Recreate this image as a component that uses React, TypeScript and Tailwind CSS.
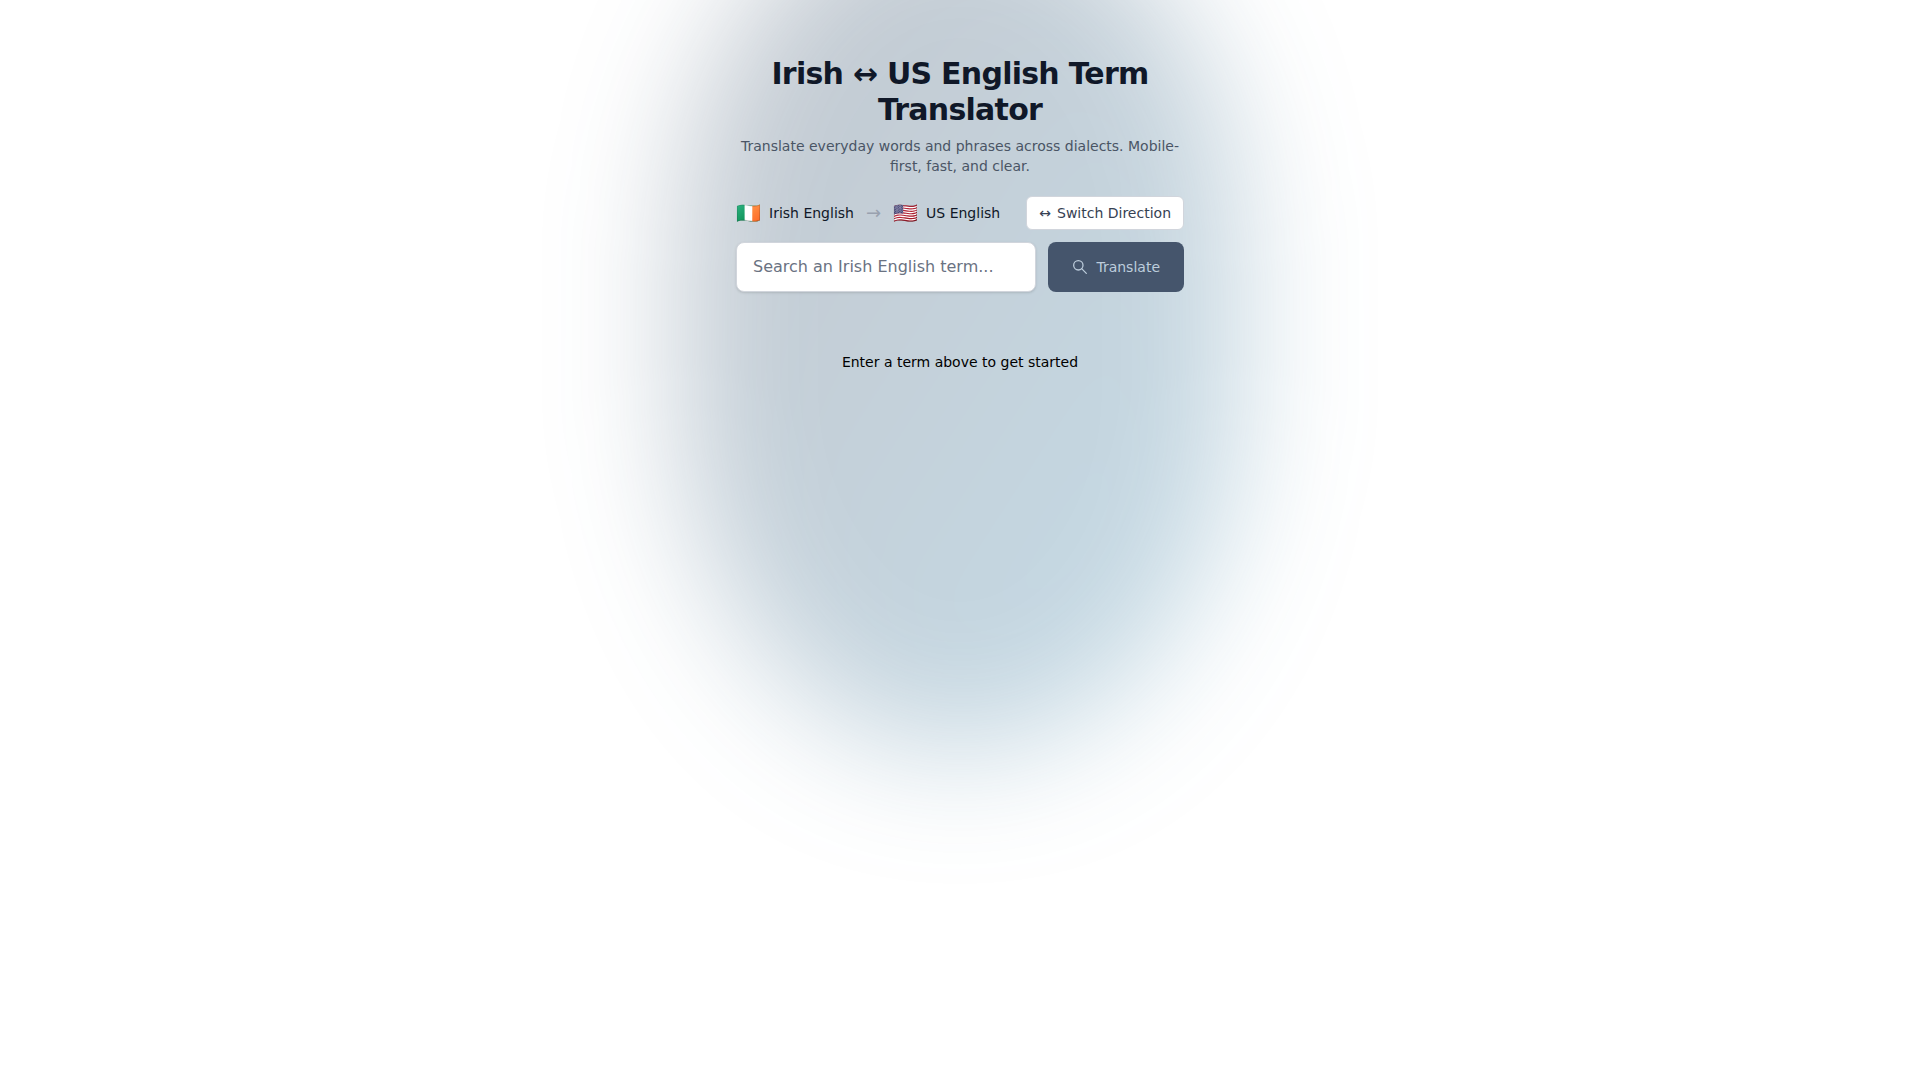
"use client";

import React, { FormEvent, useState } from "react";

// the two dialects that can be translated
const dialects = {
  irish: { flag: "🇮🇪", name: "Irish English", placeholder: "Search an Irish English term..." },
  us: { flag: "🇺🇸", name: "US English", placeholder: "Search a US English term..." },
};

const App = () => {
  const [fromIrish, setFromIrish] = useState(true);
  const [term, setTerm] = useState("");

  const source = fromIrish ? dialects.irish : dialects.us;
  const target = fromIrish ? dialects.us : dialects.irish;

  // function for submitting the term
  const handleSubmit = (e: FormEvent) => {
    e.preventDefault();
  };

  return (
    <div className="relative isolate min-h-screen overflow-hidden bg-white font-['DejaVu_Sans',sans-serif] text-black">
      {/* soft glow behind the content */}
      <div
        aria-hidden="true"
        className="absolute inset-x-0 -top-28 -z-10 flex justify-center blur-3xl"
      >
        <div className="h-[80vh] w-140 rounded-[50%/42%] bg-linear-to-br from-[#1e2f48] to-[#2480ac] opacity-27" />
      </div>

      <main className="mx-auto w-full max-w-md pt-14">
        <header className="text-center">
          <h1 className="text-3xl font-bold tracking-tight text-gray-900">
            Irish ↔ US English Term Translator
          </h1>
          <p className="mt-2 text-sm text-gray-600">
            Translate everyday words and phrases across dialects. Mobile-first, fast, and clear.
          </p>
        </header>

        <div className="mt-5 flex items-center justify-between">
          <div className="flex items-center gap-3 text-sm text-gray-900">
            <span className="flex items-center gap-2">
              <span className="text-xl">{source.flag}</span>
              <span>{source.name}</span>
            </span>
            <span className="text-lg text-gray-400">→</span>
            <span className="flex items-center gap-2">
              <span className="text-xl">{target.flag}</span>
              <span>{target.name}</span>
            </span>
          </div>
          <button
            type="button"
            onClick={() => setFromIrish(!fromIrish)}
            className="flex items-center gap-1.5 rounded-md border border-gray-300 bg-white px-3 py-1.5 text-sm text-gray-700"
          >
            <span>↔</span>
            <span>Switch Direction</span>
          </button>
        </div>

        <form onSubmit={handleSubmit} className="mt-3 flex gap-3">
          <input
            type="text"
            name="term"
            aria-label="Term to translate"
            placeholder={source.placeholder}
            value={term}
            onChange={(e) => setTerm(e.target.value)}
            className="min-w-0 flex-1 rounded-lg border border-gray-300 bg-white px-4 py-3 text-base shadow-sm placeholder:text-gray-500"
          />
          <button
            type="submit"
            className="flex items-center gap-2 rounded-lg bg-slate-600 px-6 text-sm text-[#bdcddc]"
          >
            <svg
              className="size-4"
              viewBox="0 0 24 24"
              fill="none"
              stroke="currentColor"
              strokeWidth="1.9"
              strokeLinecap="round"
            >
              <circle cx="9.5" cy="9.5" r="7" />
              <path d="m21.5 21.5-7-7" />
            </svg>
            Translate
          </button>
        </form>

        <p className="mt-15 text-center text-sm">Enter a term above to get started</p>
      </main>
    </div>
  );
};

export default App;
